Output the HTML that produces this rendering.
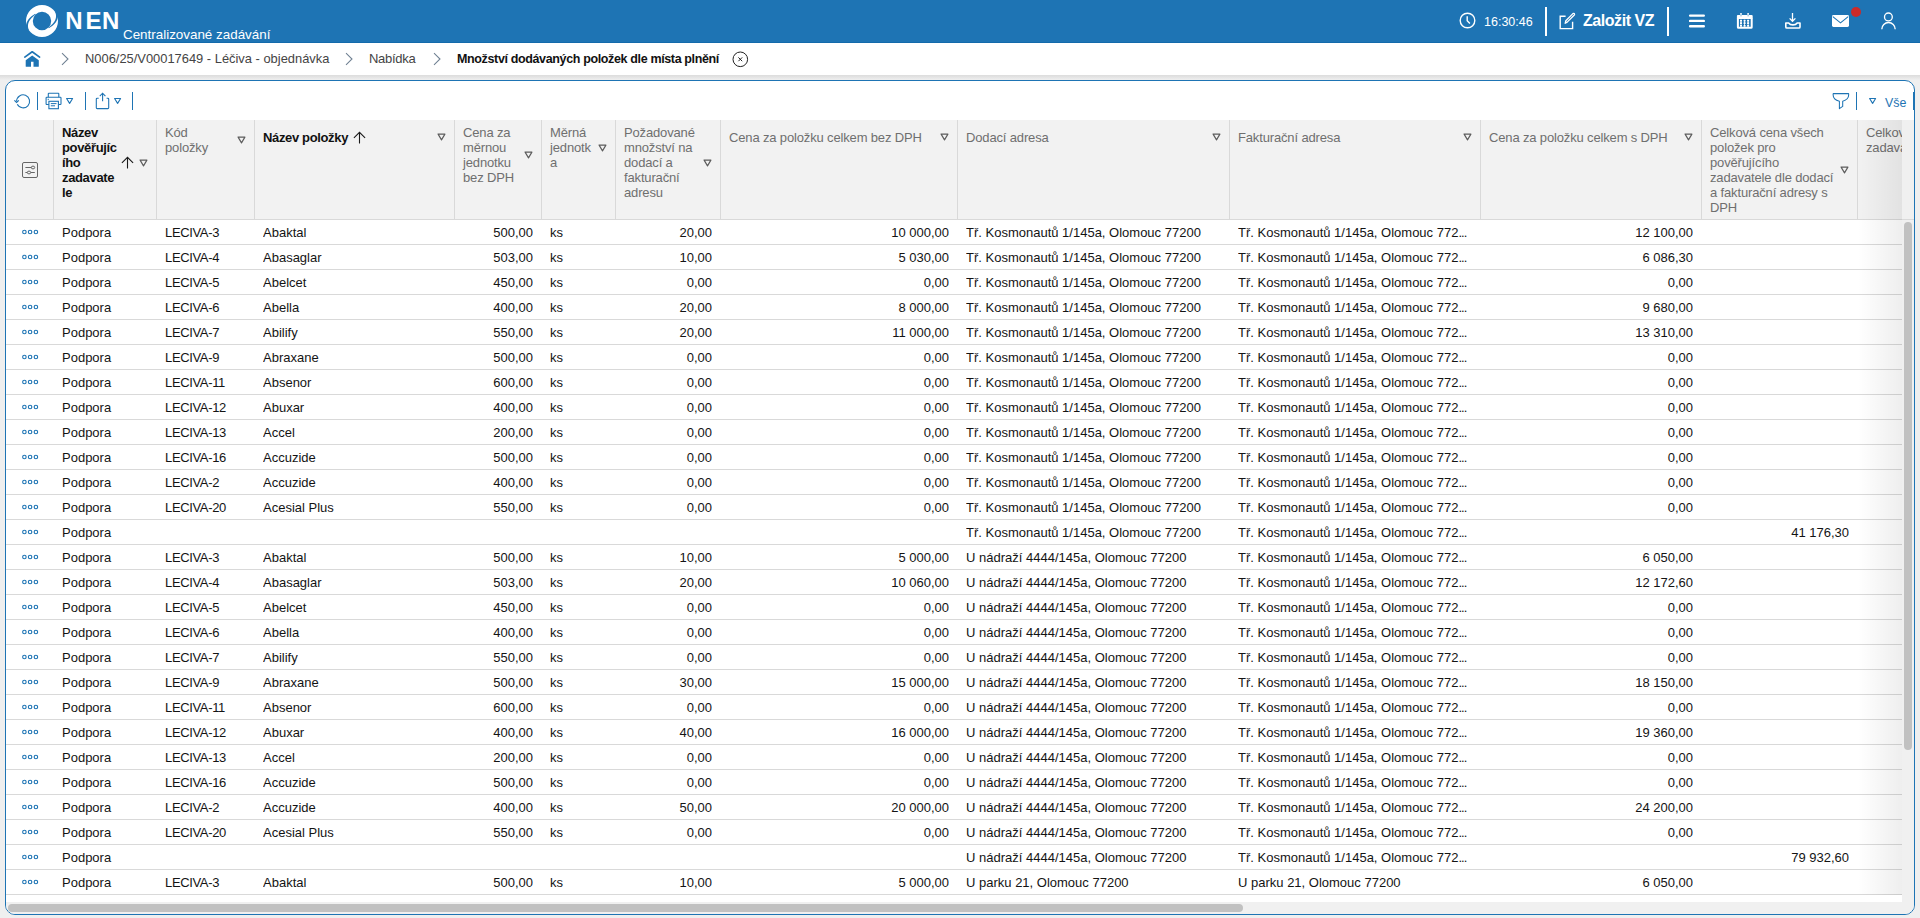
<!DOCTYPE html><html><head><meta charset="utf-8"><style>
*{box-sizing:border-box;margin:0;padding:0}
html,body{width:1920px;height:918px;overflow:hidden;background:#efefef;font-family:"Liberation Sans",sans-serif;font-size:13px;color:#141414}
.abs{position:absolute}
#top{position:absolute;left:0;top:0;width:1920px;height:43px;background:#1e74b4;border-bottom:1px solid #136aab;color:#fff}
#bc{position:absolute;left:0;top:43px;width:1920px;height:32px;background:#fff}
#bcsh{position:absolute;left:0;top:75px;width:1920px;height:5px;background:linear-gradient(#dcdcdc,#efefef)}
#panel{position:absolute;left:5px;top:80px;width:1910px;height:835px;border:1px solid #1e74b4;border-radius:10px;background:#fff;overflow:hidden}
.sep{position:absolute;width:1px;height:18px;background:#1e74b4;top:12px}
.hc{position:absolute;top:39px;height:99px;background:#f2f2f2;border-left:1px solid #d9d9d9;}
.hc .in{position:absolute;left:8px;top:5px;right:8px;display:flex;align-items:center;min-height:24px}
.hc .tx{line-height:15px;color:#6f6f6f;flex:none;white-space:nowrap;letter-spacing:-0.15px}
.hc .tx.b{font-weight:bold;color:#111;letter-spacing:-0.35px}
.hc .tri{position:absolute;right:0}
.hc .arr{margin-left:4.5px;flex:none}
.row{position:absolute;left:0;width:1896px;height:25px;border-bottom:1px solid #d9d9d9}
.c{position:absolute;top:1px;height:23px;line-height:23px;white-space:nowrap;overflow:hidden}
.r{text-align:right}
</style></head><body>
<div id="top"><svg class="abs" style="left:25px;top:4px" width="34" height="34" viewBox="0 0 34 34">
<path fill="#fff" fill-rule="evenodd" d="M17 1A16 16 0 1 0 17 33A16 16 0 1 0 17 1ZM17 7.8A9.2 9.2 0 1 1 17 26.2A9.2 9.2 0 1 1 17 7.8Z"/>
<path d="M30.25 7.96 L30.69 9.40 L30.94 10.80 L31.03 12.16 L30.93 13.49 L30.66 14.80 L30.21 16.09 L29.56 17.37 L28.72 18.62 L27.69 19.86 L26.45 21.08 L25.01 22.26 L23.37 23.42 L23.83 24.18 L25.60 23.10 L27.19 21.96 L28.59 20.76 L29.81 19.51 L30.85 18.19 L31.69 16.81 L32.35 15.36 L32.80 13.84 L33.05 12.26 L33.09 10.63 L32.92 8.96 L32.55 7.24ZM3.75 26.04 L3.31 24.60 L3.06 23.20 L2.97 21.84 L3.07 20.51 L3.34 19.20 L3.79 17.91 L4.44 16.63 L5.28 15.38 L6.31 14.14 L7.55 12.92 L8.99 11.74 L10.63 10.58 L10.17 9.82 L8.40 10.90 L6.81 12.04 L5.41 13.24 L4.19 14.49 L3.15 15.81 L2.31 17.19 L1.65 18.64 L1.20 20.16 L0.95 21.74 L0.91 23.37 L1.08 25.04 L1.45 26.76Z" fill="#1e74b4"/>
</svg><div class="abs" style="left:65px;top:7px;font-size:24px;font-weight:bold;line-height:28px;width:60px;height:28px"><span class="abs" style="left:0.3px">N</span><span class="abs" style="left:20.6px">E</span><span class="abs" style="left:37.1px">N</span></div><div class="abs" style="left:123px;top:27px;font-size:13.4px;line-height:15px">Centralizované zadávání</div>
<svg class="abs" style="left:1459px;top:12px" width="17" height="17" viewBox="0 0 17 17"><circle cx="8.5" cy="8.5" r="7.3" fill="none" stroke="#fff" stroke-width="1.4"/><path d="M8.2 4.3V8.7L10.9 11.4" fill="none" stroke="#fff" stroke-width="1.4"/></svg>
<div class="abs" style="left:1484px;top:14.5px;font-size:12.5px;line-height:15px">16:30:46</div>
<div class="abs" style="left:1545px;top:7px;width:2px;height:29px;background:#fff"></div>
<svg class="abs" style="left:1558px;top:12px" width="18" height="18" viewBox="0 0 18 18"><path d="M7.6 4.3H2.2V16.6H14.6V9.8" fill="none" stroke="#fff" stroke-width="1.4"/><path d="M7.2 11.3L7.8 8.7L14.9 1.6Q15.6 1 16.3 1.6Q16.9 2.3 16.3 3L9.2 10.1Z" fill="none" stroke="#fff" stroke-width="1.3" stroke-linejoin="round"/></svg>
<div class="abs" style="left:1583px;top:11px;font-size:16px;font-weight:bold;line-height:19px;letter-spacing:-0.45px">Založit VZ</div>
<div class="abs" style="left:1667px;top:7px;width:2px;height:29px;background:#fff"></div>
<svg class="abs" style="left:1688px;top:12px" width="18" height="18" viewBox="0 0 18 18"><path d="M2.1 3.6H15.8M2.1 8.9H15.8M2.1 14.3H15.8" stroke="#fff" stroke-width="2.4" stroke-linecap="round"/></svg>
<svg class="abs" style="left:1736px;top:12px" width="18" height="18" viewBox="0 0 18 18"><path d="M0.9 7V3.9Q0.9 2.9 1.9 2.9H15.7Q16.7 2.9 16.7 3.9V7Z" fill="#fff"/><path d="M1.9 6.5V15.3Q1.9 15.8 2.4 15.8H15.2Q15.7 15.8 15.7 15.3V6.5" fill="none" stroke="#fff" stroke-width="2"/><path d="M5 1V4.6M12.1 1V4.6" stroke="#fff" stroke-width="1.5"/><path d="M5 2.6V4.4M12.1 2.6V4.4" stroke="#1e74b4" stroke-width="0.6"/><g fill="#fff"><rect x="4" y="7.8" width="2" height="1.7"/><rect x="7.6" y="7.8" width="2" height="1.7"/><rect x="11.1" y="7.8" width="2" height="1.7"/><rect x="4" y="10.3" width="2" height="1.7"/><rect x="7.6" y="10.3" width="2" height="1.7"/><rect x="11.1" y="10.3" width="2" height="1.7"/><rect x="4" y="13" width="2" height="1.6"/><rect x="7.6" y="13" width="2" height="1.6"/><rect x="11.1" y="13" width="2" height="1.6"/><rect x="4.6" y="7.8" width="0.8" height="6.8"/><rect x="8.2" y="7.8" width="0.8" height="6.8"/><rect x="11.7" y="7.8" width="0.8" height="6.8"/></g></svg>
<svg class="abs" style="left:1784px;top:12px" width="18" height="18" viewBox="0 0 18 18"><path d="M8.5 1V9.2M5.6 6.4L8.5 9.3L11.4 6.4" fill="none" stroke="#fff" stroke-width="1.3"/><path d="M1.8 11H4.6Q6 12.9 8.9 12.9Q11.8 12.9 13.2 11H16V14.9Q16 16 14.9 16H2.9Q1.8 16 1.8 14.9Z" fill="none" stroke="#fff" stroke-width="1.6" stroke-linejoin="round"/></svg>
<svg class="abs" style="left:1832px;top:15px" width="17" height="12" viewBox="0 0 17 12"><rect x="0" y="0" width="17" height="12" rx="1.4" fill="#fff"/><path d="M0.8 1.6L8.5 7.9L16.2 1.6" fill="none" stroke="#1e74b4" stroke-width="1.1"/></svg>
<div class="abs" style="left:1851px;top:7px;width:10px;height:10px;border-radius:50%;background:#cb2a2a"></div>
<svg class="abs" style="left:1880px;top:12px" width="18" height="18" viewBox="0 0 18 18"><circle cx="8.4" cy="4.9" r="3.9" fill="none" stroke="#fff" stroke-width="1.35"/><path d="M1.8 17.2A6.7 6.7 0 0 1 15.2 17.2" fill="none" stroke="#fff" stroke-width="1.35"/></svg>
</div>
<div id="bc"></div><div id="bcsh"></div>
<svg class="abs" style="left:23px;top:50px" width="18" height="18" viewBox="0 0 18 18"><path d="M1.8 7.1L9.2 1.8L16.6 7.1" fill="none" stroke="#1e74b4" stroke-width="1.7" stroke-linecap="round" stroke-linejoin="round"/><path d="M2.7 10.3L9.2 5.6L15.8 10.3V16.3Q15.8 16.8 15.3 16.8H10.5V11.8H8V16.8H3.2Q2.7 16.8 2.7 16.3Z" fill="#1e74b4"/></svg>
<svg class="abs" style="left:61px;top:52px" width="9" height="14" viewBox="0 0 9 14"><path d="M1 1.2L7 7L1 12.8" fill="none" stroke="#6f8092" stroke-width="1.05"/></svg>
<div class="abs" style="left:85px;top:51px;font-size:12.9px;line-height:15px;color:#444;white-space:nowrap">N006/25/V00017649 - Léčiva - objednávka</div>
<svg class="abs" style="left:345px;top:52px" width="9" height="14" viewBox="0 0 9 14"><path d="M1 1.2L7 7L1 12.8" fill="none" stroke="#6f8092" stroke-width="1.05"/></svg>
<div class="abs" style="left:369px;top:51px;font-size:13px;letter-spacing:-0.3px;line-height:15px;color:#444">Nabídka</div>
<svg class="abs" style="left:433px;top:52px" width="9" height="14" viewBox="0 0 9 14"><path d="M1 1.2L7 7L1 12.8" fill="none" stroke="#6f8092" stroke-width="1.05"/></svg>
<div class="abs" style="left:457px;top:51.5px;font-size:12.5px;font-weight:bold;line-height:15px;color:#111;letter-spacing:-0.36px;white-space:nowrap">Množství dodávaných položek dle místa plnění</div>
<svg class="abs" style="left:732px;top:51px" width="17" height="17" viewBox="0 0 17 17"><circle cx="8.3" cy="8.3" r="7.3" fill="none" stroke="#222" stroke-width="1"/><path d="M6.4 6.4L10.2 10.2M10.2 6.4L6.4 10.2" stroke="#222" stroke-width="1"/></svg>
<div id="panel">
<svg class="abs" style="left:6px;top:10px" width="20" height="20" viewBox="0 0 20 20"><path d="M4.6 10.2A6.5 6.5 0 1 1 5.3 13.3" fill="none" stroke="#1e74b4" stroke-width="1.1"/><path d="M2.4 9.3L4.6 11.5L6.8 9.3" fill="none" stroke="#1e74b4" stroke-width="1.2"/></svg>
<div class="sep" style="left:31px;top:11px"></div>
<div class="sep" style="left:79px;top:11px"></div>
<div class="sep" style="left:126px;top:11px"></div>
<div class="sep" style="left:1850px;top:11px"></div>
<svg class="abs" style="left:39px;top:11px" width="18" height="18" viewBox="0 0 18 18"><path d="M3.3 5.3V1.8Q3.3 1.2 3.9 1.2H13.2Q13.8 1.2 13.8 1.8V5.3" fill="none" stroke="#1e74b4" stroke-width="1.1"/><path d="M4 12.5H1.8Q1.1 12.5 1.1 11.8V6Q1.1 5.3 1.8 5.3H15.3Q16 5.3 16 6V11.8Q16 12.5 15.3 12.5H13.3" fill="none" stroke="#1e74b4" stroke-width="1.1"/><rect x="3.9" y="9.3" width="9.5" height="7.4" fill="#fff" stroke="#1e74b4" stroke-width="1.1"/><path d="M5.8 11.6H11.5M5.8 13.8H10" stroke="#1e74b4" stroke-width="1"/><path d="M2.6 7.3H4" stroke="#1e74b4" stroke-width="0.9"/></svg>
<svg class="abs" style="left:59px;top:16px" width="9" height="8" viewBox="0 0 9 8"><path d="M1.6 1.5H7.6L4.6 6.4Z" fill="none" stroke="#1e74b4" stroke-width="1.1" stroke-linejoin="round"/></svg>
<svg class="abs" style="left:89px;top:11px" width="15" height="18" viewBox="0 0 15 18"><path d="M3.7 6.3H2.1Q1.3 6.3 1.3 7.1V15.8Q1.3 16.6 2.1 16.6H12.9Q13.7 16.6 13.7 15.8V7.1Q13.7 6.3 12.9 6.3H11.6" fill="none" stroke="#1e74b4" stroke-width="1.1"/><path d="M7.6 9.2V1.3M4.8 4.2L7.6 1.2L10.4 4.2" fill="none" stroke="#1e74b4" stroke-width="1.1"/></svg>
<svg class="abs" style="left:107px;top:16px" width="9" height="8" viewBox="0 0 9 8"><path d="M1.6 1.5H7.6L4.6 6.4Z" fill="none" stroke="#1e74b4" stroke-width="1.1" stroke-linejoin="round"/></svg>
<div class="abs" style="left:1907px;top:11px;width:1px;height:18px;background:#1e74b4"></div>
<svg class="abs" style="left:1826px;top:11px" width="18" height="18" viewBox="0 0 18 18"><path d="M1.2 1.6H16.6Q17.4 7.6 10.7 9.2V14.4L7.4 16.6V9.2Q0.4 7.6 1.2 1.6Z" fill="none" stroke="#1e74b4" stroke-width="1.05" stroke-linejoin="round"/></svg>
<svg class="abs" style="left:1862px;top:16px" width="9" height="8" viewBox="0 0 9 8"><path d="M1.6 1.5H7.6L4.6 6.4Z" fill="none" stroke="#1e74b4" stroke-width="1.1" stroke-linejoin="round"/></svg>
<div class="abs" style="left:1879px;top:15px;font-size:12.4px;line-height:15px;color:#1e74b4">Vše</div>
<div class="hc" style="left:0;width:47px;border-left:none"></div>
<svg class="abs" style="left:15px;top:80px" width="18" height="18" viewBox="0 0 18 18"><rect x="1.5" y="1.5" width="15" height="15" rx="1.5" fill="none" stroke="#666" stroke-width="1"/><path d="M4.4 6.5H10.4M4.4 11.5H6.3M9.7 11.5H13.8" stroke="#666" stroke-width="1"/><ellipse cx="12" cy="6.5" rx="1.7" ry="1.4" fill="none" stroke="#666" stroke-width="1"/><ellipse cx="8" cy="11.5" rx="1.7" ry="1.4" fill="none" stroke="#666" stroke-width="1"/></svg>
<div class="hc" style="left:47px;width:103px"><div class="in"><span class="tx b">Název<br>pověřujíc<br>ího<br>zadavate<br>le</span><svg class="arr" width="13" height="13" viewBox="0 0 13 13"><path d="M6.5 1.3V12.6M0.9 6.9L6.5 1.3L12.1 6.9" fill="none" stroke="#1a1a1a" stroke-width="1.1"/></svg><svg class="tri" width="9" height="8" viewBox="0 0 9 8"><path d="M1.1 1.1H7.9L4.5 6.9Z" fill="none" stroke="#5c5c5c" stroke-width="1.15" stroke-linejoin="round"/></svg></div></div>
<div class="hc" style="left:150px;width:98px"><div class="in"><span class="tx">Kód<br>položky</span><svg class="tri" width="9" height="8" viewBox="0 0 9 8"><path d="M1.1 1.1H7.9L4.5 6.9Z" fill="none" stroke="#5c5c5c" stroke-width="1.15" stroke-linejoin="round"/></svg></div></div>
<div class="hc" style="left:248px;width:200px"><div class="in"><span class="tx b">Název položky</span><svg class="arr" width="13" height="13" viewBox="0 0 13 13"><path d="M6.5 1.3V12.6M0.9 6.9L6.5 1.3L12.1 6.9" fill="none" stroke="#1a1a1a" stroke-width="1.1"/></svg><svg class="tri" width="9" height="8" viewBox="0 0 9 8"><path d="M1.1 1.1H7.9L4.5 6.9Z" fill="none" stroke="#5c5c5c" stroke-width="1.15" stroke-linejoin="round"/></svg></div></div>
<div class="hc" style="left:448px;width:87px"><div class="in"><span class="tx">Cena za<br>měrnou<br>jednotku<br>bez DPH</span><svg class="tri" width="9" height="8" viewBox="0 0 9 8"><path d="M1.1 1.1H7.9L4.5 6.9Z" fill="none" stroke="#5c5c5c" stroke-width="1.15" stroke-linejoin="round"/></svg></div></div>
<div class="hc" style="left:535px;width:74px"><div class="in"><span class="tx">Měrná<br>jednotk<br>a</span><svg class="tri" width="9" height="8" viewBox="0 0 9 8"><path d="M1.1 1.1H7.9L4.5 6.9Z" fill="none" stroke="#5c5c5c" stroke-width="1.15" stroke-linejoin="round"/></svg></div></div>
<div class="hc" style="left:609px;width:105px"><div class="in"><span class="tx">Požadované<br>množství na<br>dodací a<br>fakturační<br>adresu</span><svg class="tri" width="9" height="8" viewBox="0 0 9 8"><path d="M1.1 1.1H7.9L4.5 6.9Z" fill="none" stroke="#5c5c5c" stroke-width="1.15" stroke-linejoin="round"/></svg></div></div>
<div class="hc" style="left:714px;width:237px"><div class="in"><span class="tx">Cena za položku celkem bez DPH</span><svg class="tri" width="9" height="8" viewBox="0 0 9 8"><path d="M1.1 1.1H7.9L4.5 6.9Z" fill="none" stroke="#5c5c5c" stroke-width="1.15" stroke-linejoin="round"/></svg></div></div>
<div class="hc" style="left:951px;width:272px"><div class="in"><span class="tx">Dodací adresa</span><svg class="tri" width="9" height="8" viewBox="0 0 9 8"><path d="M1.1 1.1H7.9L4.5 6.9Z" fill="none" stroke="#5c5c5c" stroke-width="1.15" stroke-linejoin="round"/></svg></div></div>
<div class="hc" style="left:1223px;width:251px"><div class="in"><span class="tx">Fakturační adresa</span><svg class="tri" width="9" height="8" viewBox="0 0 9 8"><path d="M1.1 1.1H7.9L4.5 6.9Z" fill="none" stroke="#5c5c5c" stroke-width="1.15" stroke-linejoin="round"/></svg></div></div>
<div class="hc" style="left:1474px;width:221px"><div class="in"><span class="tx">Cena za položku celkem s DPH</span><svg class="tri" width="9" height="8" viewBox="0 0 9 8"><path d="M1.1 1.1H7.9L4.5 6.9Z" fill="none" stroke="#5c5c5c" stroke-width="1.15" stroke-linejoin="round"/></svg></div></div>
<div class="hc" style="left:1695px;width:156px"><div class="in"><span class="tx">Celková cena všech<br>položek pro<br>pověřujícího<br>zadavatele dle dodací<br>a fakturační adresy s<br>DPH</span><svg class="tri" width="9" height="8" viewBox="0 0 9 8"><path d="M1.1 1.1H7.9L4.5 6.9Z" fill="none" stroke="#5c5c5c" stroke-width="1.15" stroke-linejoin="round"/></svg></div></div>
<div class="hc" style="left:1851px;width:243px"><div class="in"><span class="tx">Celková cena všech<br>zadavatele</span><svg class="tri" width="9" height="8" viewBox="0 0 9 8"><path d="M1.1 1.1H7.9L4.5 6.9Z" fill="none" stroke="#5c5c5c" stroke-width="1.15" stroke-linejoin="round"/></svg></div></div>
<div class="abs" style="left:0;top:138px;width:1896px;height:1px;background:#d9d9d9"></div>
<div class="row" style="top:139px"><svg class="abs" style="left:15px;top:8px" width="19" height="8" viewBox="0 0 19 8"><g fill="none" stroke="#1e74b4" stroke-width="1.15"><circle cx="3.4" cy="4" r="1.75"/><circle cx="9.1" cy="4" r="1.75"/><circle cx="14.9" cy="4" r="1.75"/></g></svg><div class="c" style="left:56px;width:94px">Podpora</div><div class="c" style="left:159px;width:89px;letter-spacing:-0.35px">LECIVA-3</div><div class="c" style="left:257px;width:191px">Abaktal</div><div class="c r" style="left:448px;width:79px">500,00</div><div class="c" style="left:544px;width:65px">ks</div><div class="c r" style="left:609px;width:97px">20,00</div><div class="c r" style="left:714px;width:229px">10 000,00</div><div class="c" style="left:960px;width:263px">Tř. Kosmonautů 1/145a, Olomouc 77200</div><div class="c" style="left:1232px;width:242px">Tř. Kosmonautů 1/145a, Olomouc 772<span style="letter-spacing:-0.9px">...</span></div><div class="c r" style="left:1474px;width:213px">12 100,00</div></div>
<div class="row" style="top:164px"><svg class="abs" style="left:15px;top:8px" width="19" height="8" viewBox="0 0 19 8"><g fill="none" stroke="#1e74b4" stroke-width="1.15"><circle cx="3.4" cy="4" r="1.75"/><circle cx="9.1" cy="4" r="1.75"/><circle cx="14.9" cy="4" r="1.75"/></g></svg><div class="c" style="left:56px;width:94px">Podpora</div><div class="c" style="left:159px;width:89px;letter-spacing:-0.35px">LECIVA-4</div><div class="c" style="left:257px;width:191px">Abasaglar</div><div class="c r" style="left:448px;width:79px">503,00</div><div class="c" style="left:544px;width:65px">ks</div><div class="c r" style="left:609px;width:97px">10,00</div><div class="c r" style="left:714px;width:229px">5 030,00</div><div class="c" style="left:960px;width:263px">Tř. Kosmonautů 1/145a, Olomouc 77200</div><div class="c" style="left:1232px;width:242px">Tř. Kosmonautů 1/145a, Olomouc 772<span style="letter-spacing:-0.9px">...</span></div><div class="c r" style="left:1474px;width:213px">6 086,30</div></div>
<div class="row" style="top:189px"><svg class="abs" style="left:15px;top:8px" width="19" height="8" viewBox="0 0 19 8"><g fill="none" stroke="#1e74b4" stroke-width="1.15"><circle cx="3.4" cy="4" r="1.75"/><circle cx="9.1" cy="4" r="1.75"/><circle cx="14.9" cy="4" r="1.75"/></g></svg><div class="c" style="left:56px;width:94px">Podpora</div><div class="c" style="left:159px;width:89px;letter-spacing:-0.35px">LECIVA-5</div><div class="c" style="left:257px;width:191px">Abelcet</div><div class="c r" style="left:448px;width:79px">450,00</div><div class="c" style="left:544px;width:65px">ks</div><div class="c r" style="left:609px;width:97px">0,00</div><div class="c r" style="left:714px;width:229px">0,00</div><div class="c" style="left:960px;width:263px">Tř. Kosmonautů 1/145a, Olomouc 77200</div><div class="c" style="left:1232px;width:242px">Tř. Kosmonautů 1/145a, Olomouc 772<span style="letter-spacing:-0.9px">...</span></div><div class="c r" style="left:1474px;width:213px">0,00</div></div>
<div class="row" style="top:214px"><svg class="abs" style="left:15px;top:8px" width="19" height="8" viewBox="0 0 19 8"><g fill="none" stroke="#1e74b4" stroke-width="1.15"><circle cx="3.4" cy="4" r="1.75"/><circle cx="9.1" cy="4" r="1.75"/><circle cx="14.9" cy="4" r="1.75"/></g></svg><div class="c" style="left:56px;width:94px">Podpora</div><div class="c" style="left:159px;width:89px;letter-spacing:-0.35px">LECIVA-6</div><div class="c" style="left:257px;width:191px">Abella</div><div class="c r" style="left:448px;width:79px">400,00</div><div class="c" style="left:544px;width:65px">ks</div><div class="c r" style="left:609px;width:97px">20,00</div><div class="c r" style="left:714px;width:229px">8 000,00</div><div class="c" style="left:960px;width:263px">Tř. Kosmonautů 1/145a, Olomouc 77200</div><div class="c" style="left:1232px;width:242px">Tř. Kosmonautů 1/145a, Olomouc 772<span style="letter-spacing:-0.9px">...</span></div><div class="c r" style="left:1474px;width:213px">9 680,00</div></div>
<div class="row" style="top:239px"><svg class="abs" style="left:15px;top:8px" width="19" height="8" viewBox="0 0 19 8"><g fill="none" stroke="#1e74b4" stroke-width="1.15"><circle cx="3.4" cy="4" r="1.75"/><circle cx="9.1" cy="4" r="1.75"/><circle cx="14.9" cy="4" r="1.75"/></g></svg><div class="c" style="left:56px;width:94px">Podpora</div><div class="c" style="left:159px;width:89px;letter-spacing:-0.35px">LECIVA-7</div><div class="c" style="left:257px;width:191px">Abilify</div><div class="c r" style="left:448px;width:79px">550,00</div><div class="c" style="left:544px;width:65px">ks</div><div class="c r" style="left:609px;width:97px">20,00</div><div class="c r" style="left:714px;width:229px">11 000,00</div><div class="c" style="left:960px;width:263px">Tř. Kosmonautů 1/145a, Olomouc 77200</div><div class="c" style="left:1232px;width:242px">Tř. Kosmonautů 1/145a, Olomouc 772<span style="letter-spacing:-0.9px">...</span></div><div class="c r" style="left:1474px;width:213px">13 310,00</div></div>
<div class="row" style="top:264px"><svg class="abs" style="left:15px;top:8px" width="19" height="8" viewBox="0 0 19 8"><g fill="none" stroke="#1e74b4" stroke-width="1.15"><circle cx="3.4" cy="4" r="1.75"/><circle cx="9.1" cy="4" r="1.75"/><circle cx="14.9" cy="4" r="1.75"/></g></svg><div class="c" style="left:56px;width:94px">Podpora</div><div class="c" style="left:159px;width:89px;letter-spacing:-0.35px">LECIVA-9</div><div class="c" style="left:257px;width:191px">Abraxane</div><div class="c r" style="left:448px;width:79px">500,00</div><div class="c" style="left:544px;width:65px">ks</div><div class="c r" style="left:609px;width:97px">0,00</div><div class="c r" style="left:714px;width:229px">0,00</div><div class="c" style="left:960px;width:263px">Tř. Kosmonautů 1/145a, Olomouc 77200</div><div class="c" style="left:1232px;width:242px">Tř. Kosmonautů 1/145a, Olomouc 772<span style="letter-spacing:-0.9px">...</span></div><div class="c r" style="left:1474px;width:213px">0,00</div></div>
<div class="row" style="top:289px"><svg class="abs" style="left:15px;top:8px" width="19" height="8" viewBox="0 0 19 8"><g fill="none" stroke="#1e74b4" stroke-width="1.15"><circle cx="3.4" cy="4" r="1.75"/><circle cx="9.1" cy="4" r="1.75"/><circle cx="14.9" cy="4" r="1.75"/></g></svg><div class="c" style="left:56px;width:94px">Podpora</div><div class="c" style="left:159px;width:89px;letter-spacing:-0.35px">LECIVA-11</div><div class="c" style="left:257px;width:191px">Absenor</div><div class="c r" style="left:448px;width:79px">600,00</div><div class="c" style="left:544px;width:65px">ks</div><div class="c r" style="left:609px;width:97px">0,00</div><div class="c r" style="left:714px;width:229px">0,00</div><div class="c" style="left:960px;width:263px">Tř. Kosmonautů 1/145a, Olomouc 77200</div><div class="c" style="left:1232px;width:242px">Tř. Kosmonautů 1/145a, Olomouc 772<span style="letter-spacing:-0.9px">...</span></div><div class="c r" style="left:1474px;width:213px">0,00</div></div>
<div class="row" style="top:314px"><svg class="abs" style="left:15px;top:8px" width="19" height="8" viewBox="0 0 19 8"><g fill="none" stroke="#1e74b4" stroke-width="1.15"><circle cx="3.4" cy="4" r="1.75"/><circle cx="9.1" cy="4" r="1.75"/><circle cx="14.9" cy="4" r="1.75"/></g></svg><div class="c" style="left:56px;width:94px">Podpora</div><div class="c" style="left:159px;width:89px;letter-spacing:-0.35px">LECIVA-12</div><div class="c" style="left:257px;width:191px">Abuxar</div><div class="c r" style="left:448px;width:79px">400,00</div><div class="c" style="left:544px;width:65px">ks</div><div class="c r" style="left:609px;width:97px">0,00</div><div class="c r" style="left:714px;width:229px">0,00</div><div class="c" style="left:960px;width:263px">Tř. Kosmonautů 1/145a, Olomouc 77200</div><div class="c" style="left:1232px;width:242px">Tř. Kosmonautů 1/145a, Olomouc 772<span style="letter-spacing:-0.9px">...</span></div><div class="c r" style="left:1474px;width:213px">0,00</div></div>
<div class="row" style="top:339px"><svg class="abs" style="left:15px;top:8px" width="19" height="8" viewBox="0 0 19 8"><g fill="none" stroke="#1e74b4" stroke-width="1.15"><circle cx="3.4" cy="4" r="1.75"/><circle cx="9.1" cy="4" r="1.75"/><circle cx="14.9" cy="4" r="1.75"/></g></svg><div class="c" style="left:56px;width:94px">Podpora</div><div class="c" style="left:159px;width:89px;letter-spacing:-0.35px">LECIVA-13</div><div class="c" style="left:257px;width:191px">Accel</div><div class="c r" style="left:448px;width:79px">200,00</div><div class="c" style="left:544px;width:65px">ks</div><div class="c r" style="left:609px;width:97px">0,00</div><div class="c r" style="left:714px;width:229px">0,00</div><div class="c" style="left:960px;width:263px">Tř. Kosmonautů 1/145a, Olomouc 77200</div><div class="c" style="left:1232px;width:242px">Tř. Kosmonautů 1/145a, Olomouc 772<span style="letter-spacing:-0.9px">...</span></div><div class="c r" style="left:1474px;width:213px">0,00</div></div>
<div class="row" style="top:364px"><svg class="abs" style="left:15px;top:8px" width="19" height="8" viewBox="0 0 19 8"><g fill="none" stroke="#1e74b4" stroke-width="1.15"><circle cx="3.4" cy="4" r="1.75"/><circle cx="9.1" cy="4" r="1.75"/><circle cx="14.9" cy="4" r="1.75"/></g></svg><div class="c" style="left:56px;width:94px">Podpora</div><div class="c" style="left:159px;width:89px;letter-spacing:-0.35px">LECIVA-16</div><div class="c" style="left:257px;width:191px">Accuzide</div><div class="c r" style="left:448px;width:79px">500,00</div><div class="c" style="left:544px;width:65px">ks</div><div class="c r" style="left:609px;width:97px">0,00</div><div class="c r" style="left:714px;width:229px">0,00</div><div class="c" style="left:960px;width:263px">Tř. Kosmonautů 1/145a, Olomouc 77200</div><div class="c" style="left:1232px;width:242px">Tř. Kosmonautů 1/145a, Olomouc 772<span style="letter-spacing:-0.9px">...</span></div><div class="c r" style="left:1474px;width:213px">0,00</div></div>
<div class="row" style="top:389px"><svg class="abs" style="left:15px;top:8px" width="19" height="8" viewBox="0 0 19 8"><g fill="none" stroke="#1e74b4" stroke-width="1.15"><circle cx="3.4" cy="4" r="1.75"/><circle cx="9.1" cy="4" r="1.75"/><circle cx="14.9" cy="4" r="1.75"/></g></svg><div class="c" style="left:56px;width:94px">Podpora</div><div class="c" style="left:159px;width:89px;letter-spacing:-0.35px">LECIVA-2</div><div class="c" style="left:257px;width:191px">Accuzide</div><div class="c r" style="left:448px;width:79px">400,00</div><div class="c" style="left:544px;width:65px">ks</div><div class="c r" style="left:609px;width:97px">0,00</div><div class="c r" style="left:714px;width:229px">0,00</div><div class="c" style="left:960px;width:263px">Tř. Kosmonautů 1/145a, Olomouc 77200</div><div class="c" style="left:1232px;width:242px">Tř. Kosmonautů 1/145a, Olomouc 772<span style="letter-spacing:-0.9px">...</span></div><div class="c r" style="left:1474px;width:213px">0,00</div></div>
<div class="row" style="top:414px"><svg class="abs" style="left:15px;top:8px" width="19" height="8" viewBox="0 0 19 8"><g fill="none" stroke="#1e74b4" stroke-width="1.15"><circle cx="3.4" cy="4" r="1.75"/><circle cx="9.1" cy="4" r="1.75"/><circle cx="14.9" cy="4" r="1.75"/></g></svg><div class="c" style="left:56px;width:94px">Podpora</div><div class="c" style="left:159px;width:89px;letter-spacing:-0.35px">LECIVA-20</div><div class="c" style="left:257px;width:191px">Acesial Plus</div><div class="c r" style="left:448px;width:79px">550,00</div><div class="c" style="left:544px;width:65px">ks</div><div class="c r" style="left:609px;width:97px">0,00</div><div class="c r" style="left:714px;width:229px">0,00</div><div class="c" style="left:960px;width:263px">Tř. Kosmonautů 1/145a, Olomouc 77200</div><div class="c" style="left:1232px;width:242px">Tř. Kosmonautů 1/145a, Olomouc 772<span style="letter-spacing:-0.9px">...</span></div><div class="c r" style="left:1474px;width:213px">0,00</div></div>
<div class="row" style="top:439px"><svg class="abs" style="left:15px;top:8px" width="19" height="8" viewBox="0 0 19 8"><g fill="none" stroke="#1e74b4" stroke-width="1.15"><circle cx="3.4" cy="4" r="1.75"/><circle cx="9.1" cy="4" r="1.75"/><circle cx="14.9" cy="4" r="1.75"/></g></svg><div class="c" style="left:56px;width:94px">Podpora</div><div class="c" style="left:960px;width:263px">Tř. Kosmonautů 1/145a, Olomouc 77200</div><div class="c" style="left:1232px;width:242px">Tř. Kosmonautů 1/145a, Olomouc 772<span style="letter-spacing:-0.9px">...</span></div><div class="c r" style="left:1695px;width:148px">41 176,30</div></div>
<div class="row" style="top:464px"><svg class="abs" style="left:15px;top:8px" width="19" height="8" viewBox="0 0 19 8"><g fill="none" stroke="#1e74b4" stroke-width="1.15"><circle cx="3.4" cy="4" r="1.75"/><circle cx="9.1" cy="4" r="1.75"/><circle cx="14.9" cy="4" r="1.75"/></g></svg><div class="c" style="left:56px;width:94px">Podpora</div><div class="c" style="left:159px;width:89px;letter-spacing:-0.35px">LECIVA-3</div><div class="c" style="left:257px;width:191px">Abaktal</div><div class="c r" style="left:448px;width:79px">500,00</div><div class="c" style="left:544px;width:65px">ks</div><div class="c r" style="left:609px;width:97px">10,00</div><div class="c r" style="left:714px;width:229px">5 000,00</div><div class="c" style="left:960px;width:263px">U nádraží 4444/145a, Olomouc 77200</div><div class="c" style="left:1232px;width:242px">Tř. Kosmonautů 1/145a, Olomouc 772<span style="letter-spacing:-0.9px">...</span></div><div class="c r" style="left:1474px;width:213px">6 050,00</div></div>
<div class="row" style="top:489px"><svg class="abs" style="left:15px;top:8px" width="19" height="8" viewBox="0 0 19 8"><g fill="none" stroke="#1e74b4" stroke-width="1.15"><circle cx="3.4" cy="4" r="1.75"/><circle cx="9.1" cy="4" r="1.75"/><circle cx="14.9" cy="4" r="1.75"/></g></svg><div class="c" style="left:56px;width:94px">Podpora</div><div class="c" style="left:159px;width:89px;letter-spacing:-0.35px">LECIVA-4</div><div class="c" style="left:257px;width:191px">Abasaglar</div><div class="c r" style="left:448px;width:79px">503,00</div><div class="c" style="left:544px;width:65px">ks</div><div class="c r" style="left:609px;width:97px">20,00</div><div class="c r" style="left:714px;width:229px">10 060,00</div><div class="c" style="left:960px;width:263px">U nádraží 4444/145a, Olomouc 77200</div><div class="c" style="left:1232px;width:242px">Tř. Kosmonautů 1/145a, Olomouc 772<span style="letter-spacing:-0.9px">...</span></div><div class="c r" style="left:1474px;width:213px">12 172,60</div></div>
<div class="row" style="top:514px"><svg class="abs" style="left:15px;top:8px" width="19" height="8" viewBox="0 0 19 8"><g fill="none" stroke="#1e74b4" stroke-width="1.15"><circle cx="3.4" cy="4" r="1.75"/><circle cx="9.1" cy="4" r="1.75"/><circle cx="14.9" cy="4" r="1.75"/></g></svg><div class="c" style="left:56px;width:94px">Podpora</div><div class="c" style="left:159px;width:89px;letter-spacing:-0.35px">LECIVA-5</div><div class="c" style="left:257px;width:191px">Abelcet</div><div class="c r" style="left:448px;width:79px">450,00</div><div class="c" style="left:544px;width:65px">ks</div><div class="c r" style="left:609px;width:97px">0,00</div><div class="c r" style="left:714px;width:229px">0,00</div><div class="c" style="left:960px;width:263px">U nádraží 4444/145a, Olomouc 77200</div><div class="c" style="left:1232px;width:242px">Tř. Kosmonautů 1/145a, Olomouc 772<span style="letter-spacing:-0.9px">...</span></div><div class="c r" style="left:1474px;width:213px">0,00</div></div>
<div class="row" style="top:539px"><svg class="abs" style="left:15px;top:8px" width="19" height="8" viewBox="0 0 19 8"><g fill="none" stroke="#1e74b4" stroke-width="1.15"><circle cx="3.4" cy="4" r="1.75"/><circle cx="9.1" cy="4" r="1.75"/><circle cx="14.9" cy="4" r="1.75"/></g></svg><div class="c" style="left:56px;width:94px">Podpora</div><div class="c" style="left:159px;width:89px;letter-spacing:-0.35px">LECIVA-6</div><div class="c" style="left:257px;width:191px">Abella</div><div class="c r" style="left:448px;width:79px">400,00</div><div class="c" style="left:544px;width:65px">ks</div><div class="c r" style="left:609px;width:97px">0,00</div><div class="c r" style="left:714px;width:229px">0,00</div><div class="c" style="left:960px;width:263px">U nádraží 4444/145a, Olomouc 77200</div><div class="c" style="left:1232px;width:242px">Tř. Kosmonautů 1/145a, Olomouc 772<span style="letter-spacing:-0.9px">...</span></div><div class="c r" style="left:1474px;width:213px">0,00</div></div>
<div class="row" style="top:564px"><svg class="abs" style="left:15px;top:8px" width="19" height="8" viewBox="0 0 19 8"><g fill="none" stroke="#1e74b4" stroke-width="1.15"><circle cx="3.4" cy="4" r="1.75"/><circle cx="9.1" cy="4" r="1.75"/><circle cx="14.9" cy="4" r="1.75"/></g></svg><div class="c" style="left:56px;width:94px">Podpora</div><div class="c" style="left:159px;width:89px;letter-spacing:-0.35px">LECIVA-7</div><div class="c" style="left:257px;width:191px">Abilify</div><div class="c r" style="left:448px;width:79px">550,00</div><div class="c" style="left:544px;width:65px">ks</div><div class="c r" style="left:609px;width:97px">0,00</div><div class="c r" style="left:714px;width:229px">0,00</div><div class="c" style="left:960px;width:263px">U nádraží 4444/145a, Olomouc 77200</div><div class="c" style="left:1232px;width:242px">Tř. Kosmonautů 1/145a, Olomouc 772<span style="letter-spacing:-0.9px">...</span></div><div class="c r" style="left:1474px;width:213px">0,00</div></div>
<div class="row" style="top:589px"><svg class="abs" style="left:15px;top:8px" width="19" height="8" viewBox="0 0 19 8"><g fill="none" stroke="#1e74b4" stroke-width="1.15"><circle cx="3.4" cy="4" r="1.75"/><circle cx="9.1" cy="4" r="1.75"/><circle cx="14.9" cy="4" r="1.75"/></g></svg><div class="c" style="left:56px;width:94px">Podpora</div><div class="c" style="left:159px;width:89px;letter-spacing:-0.35px">LECIVA-9</div><div class="c" style="left:257px;width:191px">Abraxane</div><div class="c r" style="left:448px;width:79px">500,00</div><div class="c" style="left:544px;width:65px">ks</div><div class="c r" style="left:609px;width:97px">30,00</div><div class="c r" style="left:714px;width:229px">15 000,00</div><div class="c" style="left:960px;width:263px">U nádraží 4444/145a, Olomouc 77200</div><div class="c" style="left:1232px;width:242px">Tř. Kosmonautů 1/145a, Olomouc 772<span style="letter-spacing:-0.9px">...</span></div><div class="c r" style="left:1474px;width:213px">18 150,00</div></div>
<div class="row" style="top:614px"><svg class="abs" style="left:15px;top:8px" width="19" height="8" viewBox="0 0 19 8"><g fill="none" stroke="#1e74b4" stroke-width="1.15"><circle cx="3.4" cy="4" r="1.75"/><circle cx="9.1" cy="4" r="1.75"/><circle cx="14.9" cy="4" r="1.75"/></g></svg><div class="c" style="left:56px;width:94px">Podpora</div><div class="c" style="left:159px;width:89px;letter-spacing:-0.35px">LECIVA-11</div><div class="c" style="left:257px;width:191px">Absenor</div><div class="c r" style="left:448px;width:79px">600,00</div><div class="c" style="left:544px;width:65px">ks</div><div class="c r" style="left:609px;width:97px">0,00</div><div class="c r" style="left:714px;width:229px">0,00</div><div class="c" style="left:960px;width:263px">U nádraží 4444/145a, Olomouc 77200</div><div class="c" style="left:1232px;width:242px">Tř. Kosmonautů 1/145a, Olomouc 772<span style="letter-spacing:-0.9px">...</span></div><div class="c r" style="left:1474px;width:213px">0,00</div></div>
<div class="row" style="top:639px"><svg class="abs" style="left:15px;top:8px" width="19" height="8" viewBox="0 0 19 8"><g fill="none" stroke="#1e74b4" stroke-width="1.15"><circle cx="3.4" cy="4" r="1.75"/><circle cx="9.1" cy="4" r="1.75"/><circle cx="14.9" cy="4" r="1.75"/></g></svg><div class="c" style="left:56px;width:94px">Podpora</div><div class="c" style="left:159px;width:89px;letter-spacing:-0.35px">LECIVA-12</div><div class="c" style="left:257px;width:191px">Abuxar</div><div class="c r" style="left:448px;width:79px">400,00</div><div class="c" style="left:544px;width:65px">ks</div><div class="c r" style="left:609px;width:97px">40,00</div><div class="c r" style="left:714px;width:229px">16 000,00</div><div class="c" style="left:960px;width:263px">U nádraží 4444/145a, Olomouc 77200</div><div class="c" style="left:1232px;width:242px">Tř. Kosmonautů 1/145a, Olomouc 772<span style="letter-spacing:-0.9px">...</span></div><div class="c r" style="left:1474px;width:213px">19 360,00</div></div>
<div class="row" style="top:664px"><svg class="abs" style="left:15px;top:8px" width="19" height="8" viewBox="0 0 19 8"><g fill="none" stroke="#1e74b4" stroke-width="1.15"><circle cx="3.4" cy="4" r="1.75"/><circle cx="9.1" cy="4" r="1.75"/><circle cx="14.9" cy="4" r="1.75"/></g></svg><div class="c" style="left:56px;width:94px">Podpora</div><div class="c" style="left:159px;width:89px;letter-spacing:-0.35px">LECIVA-13</div><div class="c" style="left:257px;width:191px">Accel</div><div class="c r" style="left:448px;width:79px">200,00</div><div class="c" style="left:544px;width:65px">ks</div><div class="c r" style="left:609px;width:97px">0,00</div><div class="c r" style="left:714px;width:229px">0,00</div><div class="c" style="left:960px;width:263px">U nádraží 4444/145a, Olomouc 77200</div><div class="c" style="left:1232px;width:242px">Tř. Kosmonautů 1/145a, Olomouc 772<span style="letter-spacing:-0.9px">...</span></div><div class="c r" style="left:1474px;width:213px">0,00</div></div>
<div class="row" style="top:689px"><svg class="abs" style="left:15px;top:8px" width="19" height="8" viewBox="0 0 19 8"><g fill="none" stroke="#1e74b4" stroke-width="1.15"><circle cx="3.4" cy="4" r="1.75"/><circle cx="9.1" cy="4" r="1.75"/><circle cx="14.9" cy="4" r="1.75"/></g></svg><div class="c" style="left:56px;width:94px">Podpora</div><div class="c" style="left:159px;width:89px;letter-spacing:-0.35px">LECIVA-16</div><div class="c" style="left:257px;width:191px">Accuzide</div><div class="c r" style="left:448px;width:79px">500,00</div><div class="c" style="left:544px;width:65px">ks</div><div class="c r" style="left:609px;width:97px">0,00</div><div class="c r" style="left:714px;width:229px">0,00</div><div class="c" style="left:960px;width:263px">U nádraží 4444/145a, Olomouc 77200</div><div class="c" style="left:1232px;width:242px">Tř. Kosmonautů 1/145a, Olomouc 772<span style="letter-spacing:-0.9px">...</span></div><div class="c r" style="left:1474px;width:213px">0,00</div></div>
<div class="row" style="top:714px"><svg class="abs" style="left:15px;top:8px" width="19" height="8" viewBox="0 0 19 8"><g fill="none" stroke="#1e74b4" stroke-width="1.15"><circle cx="3.4" cy="4" r="1.75"/><circle cx="9.1" cy="4" r="1.75"/><circle cx="14.9" cy="4" r="1.75"/></g></svg><div class="c" style="left:56px;width:94px">Podpora</div><div class="c" style="left:159px;width:89px;letter-spacing:-0.35px">LECIVA-2</div><div class="c" style="left:257px;width:191px">Accuzide</div><div class="c r" style="left:448px;width:79px">400,00</div><div class="c" style="left:544px;width:65px">ks</div><div class="c r" style="left:609px;width:97px">50,00</div><div class="c r" style="left:714px;width:229px">20 000,00</div><div class="c" style="left:960px;width:263px">U nádraží 4444/145a, Olomouc 77200</div><div class="c" style="left:1232px;width:242px">Tř. Kosmonautů 1/145a, Olomouc 772<span style="letter-spacing:-0.9px">...</span></div><div class="c r" style="left:1474px;width:213px">24 200,00</div></div>
<div class="row" style="top:739px"><svg class="abs" style="left:15px;top:8px" width="19" height="8" viewBox="0 0 19 8"><g fill="none" stroke="#1e74b4" stroke-width="1.15"><circle cx="3.4" cy="4" r="1.75"/><circle cx="9.1" cy="4" r="1.75"/><circle cx="14.9" cy="4" r="1.75"/></g></svg><div class="c" style="left:56px;width:94px">Podpora</div><div class="c" style="left:159px;width:89px;letter-spacing:-0.35px">LECIVA-20</div><div class="c" style="left:257px;width:191px">Acesial Plus</div><div class="c r" style="left:448px;width:79px">550,00</div><div class="c" style="left:544px;width:65px">ks</div><div class="c r" style="left:609px;width:97px">0,00</div><div class="c r" style="left:714px;width:229px">0,00</div><div class="c" style="left:960px;width:263px">U nádraží 4444/145a, Olomouc 77200</div><div class="c" style="left:1232px;width:242px">Tř. Kosmonautů 1/145a, Olomouc 772<span style="letter-spacing:-0.9px">...</span></div><div class="c r" style="left:1474px;width:213px">0,00</div></div>
<div class="row" style="top:764px"><svg class="abs" style="left:15px;top:8px" width="19" height="8" viewBox="0 0 19 8"><g fill="none" stroke="#1e74b4" stroke-width="1.15"><circle cx="3.4" cy="4" r="1.75"/><circle cx="9.1" cy="4" r="1.75"/><circle cx="14.9" cy="4" r="1.75"/></g></svg><div class="c" style="left:56px;width:94px">Podpora</div><div class="c" style="left:960px;width:263px">U nádraží 4444/145a, Olomouc 77200</div><div class="c" style="left:1232px;width:242px">Tř. Kosmonautů 1/145a, Olomouc 772<span style="letter-spacing:-0.9px">...</span></div><div class="c r" style="left:1695px;width:148px">79 932,60</div></div>
<div class="row" style="top:789px"><svg class="abs" style="left:15px;top:8px" width="19" height="8" viewBox="0 0 19 8"><g fill="none" stroke="#1e74b4" stroke-width="1.15"><circle cx="3.4" cy="4" r="1.75"/><circle cx="9.1" cy="4" r="1.75"/><circle cx="14.9" cy="4" r="1.75"/></g></svg><div class="c" style="left:56px;width:94px">Podpora</div><div class="c" style="left:159px;width:89px;letter-spacing:-0.35px">LECIVA-3</div><div class="c" style="left:257px;width:191px">Abaktal</div><div class="c r" style="left:448px;width:79px">500,00</div><div class="c" style="left:544px;width:65px">ks</div><div class="c r" style="left:609px;width:97px">10,00</div><div class="c r" style="left:714px;width:229px">5 000,00</div><div class="c" style="left:960px;width:263px">U parku 21, Olomouc 77200</div><div class="c" style="left:1232px;width:242px">U parku 21, Olomouc 77200</div><div class="c r" style="left:1474px;width:213px">6 050,00</div></div>
<div class="abs" style="left:1852px;top:39px;width:44px;height:775px;background:linear-gradient(to right,rgba(0,0,0,0),rgba(0,0,0,0.065))"></div>
<div class="abs" style="left:1896px;top:39px;width:12px;height:794px;background:#f0f0f0"></div>
<div class="abs" style="left:1896px;top:138px;width:12px;height:1px;background:#d9d9d9"></div>
<div class="abs" style="left:1898px;top:141px;width:8px;height:528px;border-radius:4px;background:#c1c1c1"></div>
<div class="abs" style="left:0;top:821px;width:1896px;height:13px;background:#f0f0f0"></div>
<div class="abs" style="left:2px;top:823px;width:1235px;height:8px;border-radius:4px;background:#c1c1c1"></div>
</div>
</body></html>
